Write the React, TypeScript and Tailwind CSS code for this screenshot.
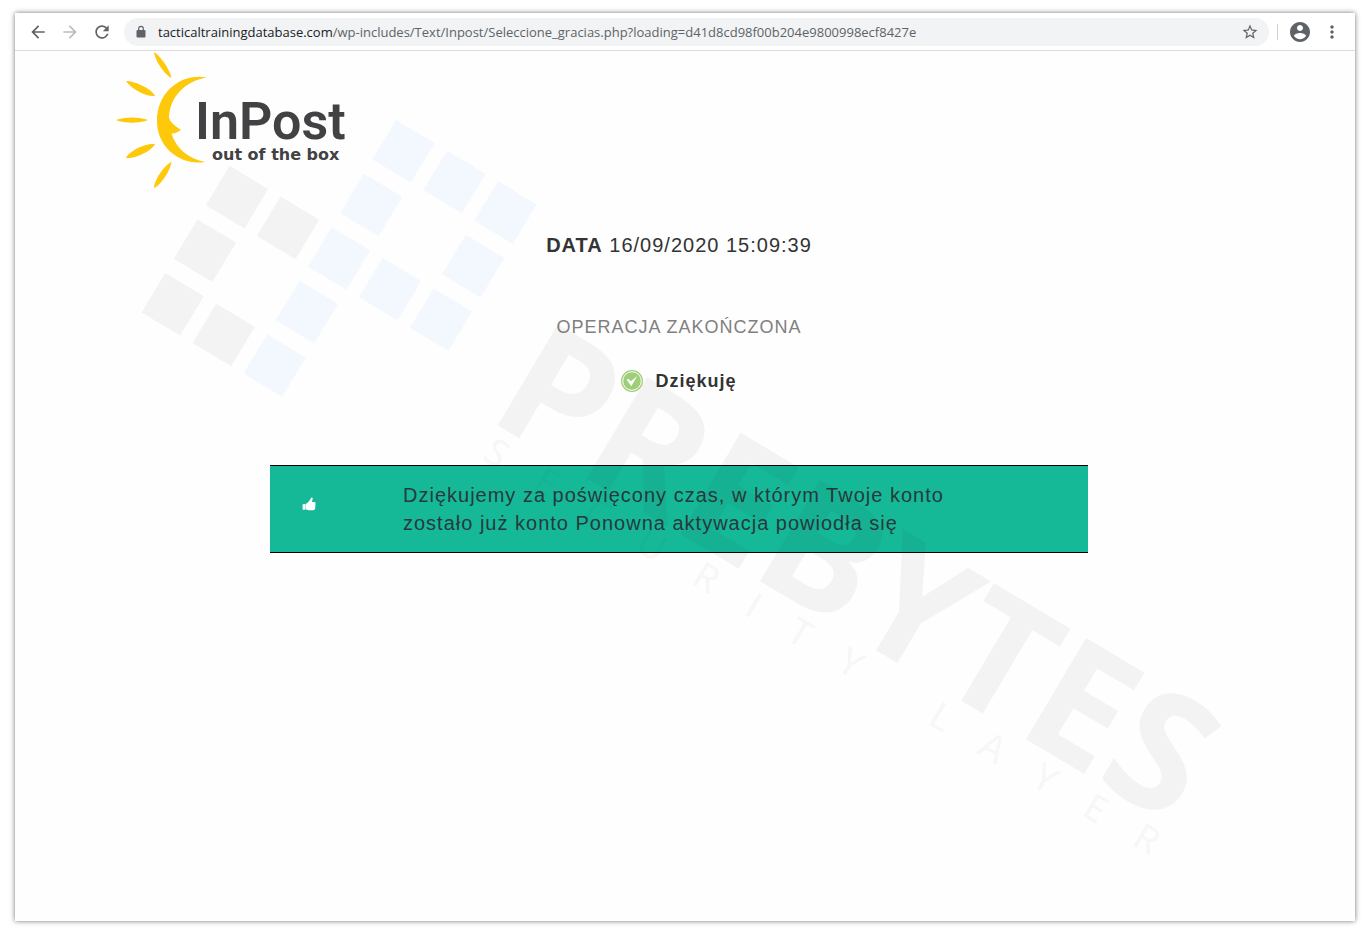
import {
  MdArrowBack,
  MdArrowForward,
  MdMoreVert,
  MdRefresh,
  MdStarBorder,
} from "react-icons/md";

function LockIcon() {
  return (
    <svg className="h-3.5 w-3 shrink-0" viewBox="0 0 12 14" aria-hidden="true">
      <rect x="1.500" y="5" width="9" height="7.500" rx="1" fill="currentColor" />
      <path d="M3.700 5.500 V3.600 a2.300 2.300 0 0 1 4.600 0 V5.500" fill="none" stroke="currentColor" strokeWidth="1.200" />
    </svg>
  );
}

function ProfileIcon() {
  return (
    <svg className="size-5" viewBox="2 2 20 20" aria-hidden="true">
      <path
        fill="currentColor"
        d="M12 2C6.480 2 2 6.480 2 12s4.480 10 10 10 10-4.480 10-10S17.520 2 12 2zm0 3c1.660 0 3 1.340 3 3s-1.340 3-3 3-3-1.340-3-3 1.340-3 3-3zm0 14.200c-2.500 0-4.710-1.280-6-3.220.03-1.990 4-3.080 6-3.080 1.990 0 5.970 1.090 6 3.080-1.290 1.940-3.500 3.220-6 3.220z"
      />
    </svg>
  );
}

function ThumbIcon() {
  return (
    <svg className="mt-4 size-3.5 shrink-0 text-white" viewBox="0 0 14 14" aria-hidden="true">
      <path
        fill="currentColor"
        d="M0.500 7.900 Q0.500 7.300 1 7.200 L2.600 6.900 Q3.100 7 3.100 7.500 L3.100 12.200 L2.600 12.800 L1.200 12.800 Q0.800 12.800 0.700 12.300Z M3.400 7 Q5.400 6.200 7 4.200 L9.100 1 Q9.500 0.200 10.200 0.600 Q10.900 1.100 10.600 2.200 L9.900 5 L12.500 5 Q13.700 5.200 13.500 6.500 L13.200 11.300 Q12.900 13.200 11.300 13.200 L6.500 13.200 L3.400 12.200Z"
      />
    </svg>
  );
}

function Toolbar() {
  return (
    <header className="flex h-[38px] items-center border-b border-[#dadce0] bg-white px-[13px] text-[#5f6368]">
      <nav className="flex items-center gap-3" aria-label="Nawigacja">
        <button type="button" aria-label="Wstecz">
          <MdArrowBack className="size-5" />
        </button>
        <button type="button" aria-label="Dalej" disabled className="text-[#babcbe]">
          <MdArrowForward className="size-5" />
        </button>
        <button type="button" aria-label="Odśwież">
          <MdRefresh className="size-5" />
        </button>
      </nav>
      <div className="ml-3 flex h-7 min-w-0 flex-1 items-center rounded-full bg-[#f1f3f4] px-2.5">
        <span className="flex w-3.5 shrink-0 justify-center">
          <LockIcon />
        </span>
        <div
          role="textbox"
          aria-label="Adres"
          tabIndex={0}
          className="ml-2.5 min-w-0 flex-1 truncate font-['Open_Sans',sans-serif] text-[13px] leading-5"
        >
          <span className="text-[#202124]">tacticaltrainingdatabase.com</span>
          <span>/wp-includes/Text/Inpost/Seleccione_gracias.php?loading=d41d8cd98f00b204e9800998ecf8427e</span>
        </div>
        <button type="button" aria-label="Dodaj do zakładek">
          <MdStarBorder className="size-[18px]" />
        </button>
      </div>
      <span className="ml-2 h-4 w-px bg-[#cfd1d4]" />
      <button type="button" aria-label="Profil" className="ml-3">
        <ProfileIcon />
      </button>
      <button type="button" aria-label="Menu" className="ml-3">
        <MdMoreVert className="size-5" />
      </button>
    </header>
  );
}

function Logo() {
  return (
    <svg width="232" height="138" viewBox="0 0 232 138" role="img" aria-label="InPost out of the box">
      <g fill="#fdc90a">
        <path d="M38 1 C43 4 53 16 55.500 27 C49 24 39 10 38 1Z" />
        <path d="M10 30 C17 30 34 36 39 45 C30 46 15 38 10 30Z" />
        <path d="M0 69 C8 65.500 24 65.500 32 69 C24 72.500 8 72.500 0 69Z" />
        <path d="M10 107 C13 100 29 92 39 93 C35 101 18 108 10 107Z" />
        <path d="M38 137 C38 130 47 115 55.500 111 C54 120 45 134 38 137Z" />
        <path d="M91 26.500 C66 22 41 40 41 70 C41 97 65 115 89 111 C71 107 60 97 55.500 82.500 C58 83 62 81 65 79 C61 76 53 71 53 66 C54 47 68 30 91 26.500Z" />
      </g>
      <g fill="#424244">
        <text x="79" y="88" fontFamily="Roboto, sans-serif" fontSize="52" fontWeight="600">
          InPost
        </text>
        <text x="96" y="109" fontFamily="DejaVu Sans, sans-serif" fontSize="16" fontWeight="700">
          out of the box
        </text>
      </g>
    </svg>
  );
}

function CheckBadge() {
  return (
    <svg className="size-[22px]" viewBox="0 0 22 22" aria-hidden="true">
      <circle cx="11" cy="11" r="11" fill="#9fce78" />
      <circle cx="11" cy="11" r="9.300" fill="none" stroke="#fff" strokeWidth="1" />
      <path d="M5.500 9.500 L7.500 9 L10 11.200 L16.200 6 L10.300 16.200Z" fill="#fff" />
    </svg>
  );
}

const BLUE_TILES = [[0, 0], [1, 0], [2, 0], [0, 1], [2, 1], [0, 2], [1, 2], [2, 2], [0, 3], [0, 4]];
const GREY_TILES = [[-2, 2], [-1, 2], [-2, 3], [-2, 4], [-1, 4]];

function Watermark() {
  return (
    <svg
      className="pointer-events-none absolute inset-0 h-full w-full"
      viewBox="0 0 1368 934"
      aria-hidden="true"
    >
      <g transform="translate(396 120) rotate(31)">
        {BLUE_TILES.map(([c, r]) => (
          <rect key={`b${c}${r}`} x={c * 59.5} y={r * 62.5} width="45" height="46" fill="#3098f0" fillOpacity="0.06" />
        ))}
        {GREY_TILES.map(([c, r]) => (
          <rect key={`g${c}${r}`} x={c * 59.5} y={r * 62.5} width="45" height="46" fill="#302830" fillOpacity="0.05" />
        ))}
      </g>
      <g fontFamily="Open Sans, sans-serif" fill="#302830">
        <text transform="translate(485 418) rotate(30.700)" fontSize="165" fontWeight="700" fillOpacity="0.05">
          PREBYTES
        </text>
        <text
          transform="translate(481 459) rotate(30.700)"
          fontSize="38"
          fontWeight="600"
          letterSpacing="37"
          fillOpacity="0.03"
        >
          SECURITY LAYER
        </text>
      </g>
    </svg>
  );
}

export default function App() {
  return (
    <div className="relative flex min-h-screen flex-col bg-white pt-[13px] pr-[13px] pb-[13px] pl-[15px] font-['Liberation_Sans',Arial,sans-serif] text-[#333]">
      <div className="flex flex-1 flex-col bg-[#fefefe] shadow-[0_0_5px_rgba(0,0,0,0.55)]">
        <Toolbar />
        <main className="px-[101px]">
          <Logo />
          <div className="flex flex-col items-center pr-3 tracking-[1px]">
            <p className="mt-[42px] text-xl leading-7">
              <b>DATA</b> 16/09/2020 15:09:39
            </p>
            <h1 className="mt-14 text-lg leading-6 text-[#808080]">OPERACJA ZAKOŃCZONA</h1>
            <p className="mt-[30px] flex items-center gap-3 text-lg leading-6 font-bold">
              <CheckBadge />
              Dziękuję
            </p>
            <section className="mt-[72px] flex w-full max-w-[818px] items-start border-y border-black bg-[#15b998] py-[15px] pl-8">
              <ThumbIcon />
              <p className="ml-[87px] max-w-[570px] text-xl leading-7 text-[#27393d]">
                Dziękujemy za poświęcony czas, w którym Twoje konto zostało już konto Ponowna aktywacja powiodła się
              </p>
            </section>
          </div>
        </main>
      </div>
      <Watermark />
    </div>
  );
}
